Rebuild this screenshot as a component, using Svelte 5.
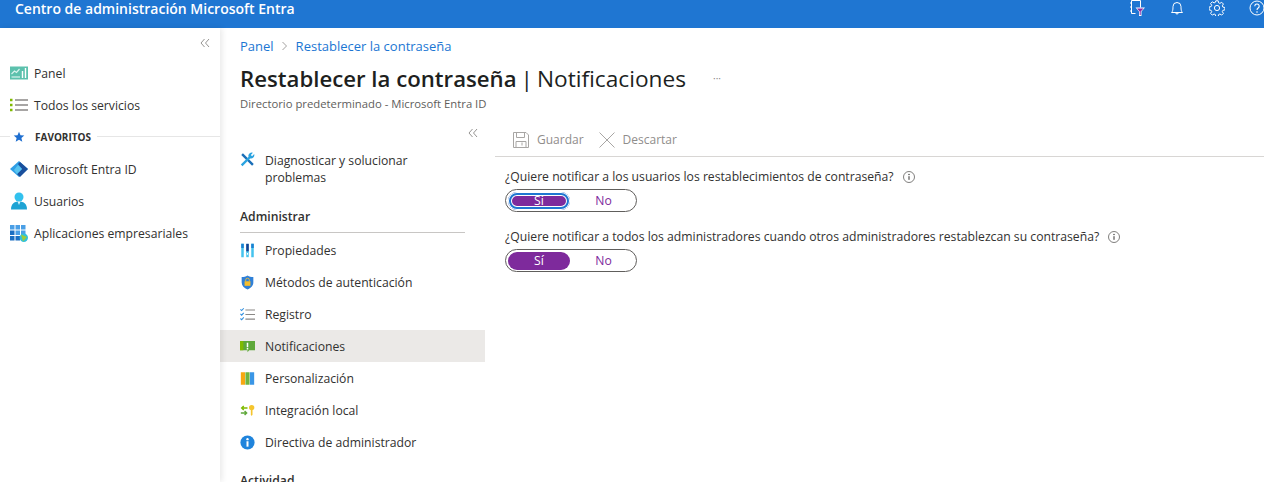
<script>
	const favorites = [
		{ id: "entra", label: "Microsoft Entra ID" },
		{ id: "users", label: "Usuarios" },
		{ id: "apps", label: "Aplicaciones empresariales" }
	];
	const manage = [
		{ id: "props", label: "Propiedades" },
		{ id: "auth", label: "Métodos de autenticación" },
		{ id: "log", label: "Registro" },
		{ id: "notif", label: "Notificaciones", active: true },
		{ id: "custom", label: "Personalización" },
		{ id: "local", label: "Integración local" },
		{ id: "admin", label: "Directiva de administrador" }
	];
	const questions = [
		{ text: "¿Quiere notificar a los usuarios los restablecimientos de contraseña?", focus: true },
		{ text: "¿Quiere notificar a todos los administradores cuando otros administradores restablezcan su contraseña?", focus: false }
	];
</script>

{#snippet icon(id)}
	<svg class="icon" viewBox="0 0 18 18" width="18" height="18" aria-hidden="true">
		{#if id === "panel"}
			<rect x="0" y="2.5" width="18" height="13" fill="#5cc1ad" />
			<path d="M1.5 10l3-3 2 1.500 3-3.500" fill="none" stroke="#d8f3ee" stroke-width="1.200" />
			<path d="M1.500 13h8.500" stroke="#d8f3ee" stroke-width="1.200" />
			<path d="M12.500 14V7M15.500 14V4" stroke="#fff" stroke-width="1.400" />
		{:else if id === "all"}
			<path d="M5 4h13M5 9h13M5 14h13" stroke="#8a8886" stroke-width="1.300" />
			<path d="M0 2.800h2.500v2.400H0zM0 7.800h2.500v2.400H0zM0 12.800h2.500v2.400H0z" fill="#7fba00" />
		{:else if id === "entra"}
			<path d="M9 1l9 8-9 8-9-8z" fill="#2f9fe6" />
			<path d="M10 2l8 7-8 8-3-3 5-5-4-5z" fill="#1a4f9c" />
			<path d="M8 5l4 4-5 5-3-4z" fill="#58c4f0" />
		{:else if id === "users"}
			<circle cx="9" cy="5" r="4.500" fill="#32c1ee" />
			<path d="M1 17.500c0-5.500 3-8 8-8s8 2.500 8 8z" fill="#1ea3d4" />
			<path d="M7.500 9.500L9 13l1.500-3.500z" fill="#d8f3fb" />
		{:else if id === "apps"}
			<path d="M0 1h4.500v4.500H0zM5.500 1H10v4.500H5.500zM11 1h4.500v4.500H11zM5.500 6.500H10V11H5.500zM11 6.500h4.500V11H11z" fill="#4a9fe6" />
			<path d="M0 6.500h4.500V11H0zM0 12h4.500v4.500H0zM5.500 12H10v4.500H5.500z" fill="#1b6ec2" />
			<circle cx="13.800" cy="13.800" r="4.200" fill="#32c1dd" />
			<path d="M11 10.500l6 2.500-4 4.500z" fill="#9ccc3c" />
		{:else if id === "tools"}
			<path d="M3.500 1.500l13 13-2 2-13-13z" fill="#1a6fb8" />
			<path d="M1 15l10-10 2 2-10 10z" fill="#2aa3e0" />
			<path d="M10 5a4 4 0 0 1 5.500-4l-2.500 2.500 1.500 1.500L17 2.500a4 4 0 0 1-5 5z" fill="#2aa3e0" />
		{:else if id === "props"}
			<path d="M1.500 1h3v16h-3zM13.500 1h3v16h-3z" fill="#45c3ee" />
			<path d="M7.500 1h3v16h-3z" fill="#45c3ee" />
			<path d="M1.500 1h3v5h-3zM13.500 1h3v5h-3z" fill="#1b7fd0" />
			<path d="M7.500 1h3v9h-3z" fill="#173f8f" />
			<path d="M8.400 12h1.200v2H8.400z" fill="#fff" />
		{:else if id === "auth"}
			<path d="M9 .5c2 1.400 4.300 2 7 2v6.500c0 4-3 6.800-7 8.500-4-1.700-7-4.500-7-8.500V2.500c2.700 0 5-.6 7-2z" fill="#2f80d8" />
			<rect x="5.500" y="7.500" width="7" height="5.500" fill="#f5bd2e" />
			<path d="M6.800 7.500V6a2.200 2.200 0 0 1 4.400 0v1.500" fill="none" stroke="#f5bd2e" stroke-width="1" />
		{:else if id === "log"}
			<path d="M.5 2.800l1.500 1.500L4.500 1.500M.5 8.300l1.500 1.500L4.500 7M.5 13.800l1.500 1.500 2.500-2.800" fill="none" stroke="#2f8fe0" stroke-width="1.300" />
			<path d="M6.500 3.500H18M6.500 9H18M6.500 14.500H18" stroke="#8a8886" stroke-width="1.300" />
		{:else if id === "notif"}
			<path d="M0 2.500h18v11h-7L9 16v-2.500H0z" fill="#5ea83a" />
			<path d="M0 2.500h4v11H0z" fill="#7fba00" />
			<path d="M8.100 4.500h1.800v5.300H8.100zM8.100 10.800h1.800v1.800H8.100z" fill="#fff" />
		{:else if id === "custom"}
			<path d="M1 1.500h5v15H1z" fill="#f7a711" />
			<path d="M6.500 1.500h5v15h-5z" fill="#6fb43f" />
			<path d="M12 1.500h5v15h-5z" fill="#3a96e6" />
		{:else if id === "local"}
			<path d="M9 6H2M4.500 3.500L2 6l2.500 2.500" fill="none" stroke="#7fba00" stroke-width="1.700" />
			<path d="M1 12h7M5.500 9.500L8 12l-2.500 2.500" fill="none" stroke="#5ea83a" stroke-width="1.700" />
			<circle cx="14" cy="5.500" r="3.200" fill="#f5c52e" />
			<path d="M13 8h2v6l-1 1.500-1-1.500z" fill="#f5c52e" />
		{:else if id === "admin"}
			<circle cx="9" cy="9" r="8.500" fill="#1f84dc" />
			<path d="M7.800 7.500h2.400v6.500H7.800z" fill="#fff" />
			<circle cx="9" cy="5" r="1.400" fill="#fff" />
		{/if}
	</svg>
{/snippet}

{#snippet chevrons()}
	<svg viewBox="0 0 10 10" width="10" height="10" aria-hidden="true">
		<path d="M4.500 1L1 5l3.500 4M9 1L5.500 5 9 9" fill="none" stroke="#8a8886" stroke-width="0.900" />
	</svg>
{/snippet}

<div class="page">
	<header class="topbar">
		<span class="brand">Centro de administración Microsoft Entra</span>
		<div class="actions">
			<svg viewBox="0 0 16 16" width="16" height="16" aria-hidden="true">
				<path d="M2.500.5h9v7M2.500.5v13h4M1 3h1.500M1 7h1.500M1 11h1.500" fill="none" stroke="#fff" stroke-width="1" />
				<path d="M6.500 7.500h9.500l-3.500 4v4.500h-2.500v-4.500z" fill="#fff" />
				<path d="M8 8.500h6.500l-2.800 3v3.500h-1v-3.500z" fill="#8a2da5" />
			</svg>
			<svg viewBox="0 0 16 16" width="16" height="16" aria-hidden="true">
				<path d="M2.500 12.500c1-1 1.500-2 1.500-6a4 4 0 0 1 8 0c0 4 .5 5 1.500 6zM6.500 12.500c0 2 3 2 3 0" fill="none" stroke="#fff" stroke-width="1" />
			</svg>
			<svg viewBox="0 0 16 16" width="16" height="16" aria-hidden="true">
				<circle cx="8" cy="8" r="2.600" fill="none" stroke="#fff" stroke-width="1" />
				<path d="M6.800.8h2.400l.4 2 1.300.6 1.800-1.100 1.700 1.700-1.100 1.800.6 1.300 2 .4v2.400l-2 .4-.6 1.300 1.100 1.800-1.700 1.700-1.800-1.100-1.300.6-.4 2H6.800l-.4-2-1.300-.6-1.800 1.100-1.700-1.700 1.100-1.800-.6-1.300-2-.4V7l2-.4.6-1.300-1.100-1.800 1.700-1.700 1.800 1.100 1.300-.6z" fill="none" stroke="#fff" stroke-width="1" />
			</svg>
			<svg viewBox="0 0 16 16" width="16" height="16" aria-hidden="true">
				<circle cx="8" cy="8" r="7" fill="none" stroke="#fff" stroke-width="1" />
				<path d="M5.800 6.200a2.200 2.200 0 1 1 3.400 1.800c-.8.500-1.200 1-1.200 2" fill="none" stroke="#fff" stroke-width="1.100" />
				<circle cx="8" cy="12" r=".8" fill="#fff" />
			</svg>
		</div>
	</header>

	<div class="body">
		<nav class="sidenav">
			<div class="collapse">{@render chevrons()}</div>
			<div class="nav-item">
				{@render icon("panel")}<span>Panel</span>
			</div>
			<div class="nav-item">
				{@render icon("all")}<span>Todos los servicios</span>
			</div>
			<div class="fav-head">
				<svg viewBox="0 0 12 12" width="12" height="12" aria-hidden="true">
					<path d="M6 .8l1.500 3.500 3.800.3-2.900 2.500.9 3.700L6 8.800l-3.300 2 .9-3.700L.7 4.600l3.800-.3z" fill="#1f6fd0" />
				</svg>
				<span>FAVORITOS</span>
			</div>
			{#each favorites as item}
				<div class="nav-item">
					{@render icon(item.id)}<span>{item.label}</span>
				</div>
			{/each}
		</nav>

		<main class="main">
			<div class="crumbs">
				<span>Panel</span>
				<svg viewBox="0 0 8 10" width="8" height="10" aria-hidden="true">
					<path d="M1.500 1l4 4-4 4" fill="none" stroke="#8a8886" stroke-width="0.800" />
				</svg>
				<span>Restablecer la contraseña</span>
			</div>
			<div class="title-row">
				<h1><strong>Restablecer la contraseña</strong><span class="section">| Notificaciones</span></h1>
				<span class="more">···</span>
			</div>
			<div class="subtitle">Directorio predeterminado - Microsoft Entra ID</div>

			<div class="blade">
				<aside class="menu">
					<div class="menu-collapse">{@render chevrons()}</div>
					<div class="menu-item wrap">
						{@render icon("tools")}<span>Diagnosticar y solucionar problemas</span>
					</div>
					<div class="menu-group">Administrar</div>
					{#each manage as item}
						<div class="menu-item" class:active={item.active}>
							{@render icon(item.id)}<span>{item.label}</span>
						</div>
					{/each}
					<div class="menu-group last">Actividad</div>
				</aside>

				<section class="content">
					<div class="toolbar">
						<button>
							<svg viewBox="0 0 16 16" width="16" height="16" aria-hidden="true">
								<path d="M.5.5h12.500l2.500 2.500v12.500H.5zM3.500.5v5h8v-5M3 15.500v-6h10v6M9 10.500v3" fill="none" stroke="#a8a6a4" stroke-width="1" />
							</svg>
							Guardar
						</button>
						<button>
							<svg viewBox="0 0 16 16" width="16" height="16" aria-hidden="true">
								<path d="M.5.5l15 15M15.500.5l-15 15" fill="none" stroke="#a8a6a4" stroke-width="1" />
							</svg>
							Descartar
						</button>
					</div>

					<div class="form">
						{#each questions as q}
							<div class="field">
								<div class="question">
									<span>{q.text}</span>
									<svg viewBox="0 0 12 12" width="12" height="12" aria-hidden="true">
										<circle cx="6" cy="6" r="5.500" fill="none" stroke="#605e5c" stroke-width="0.800" />
										<path d="M6 5.200v3.600" stroke="#323130" stroke-width="1" />
										<circle cx="6" cy="3.500" r=".7" fill="#323130" />
									</svg>
								</div>
								<div class="toggle" class:focus={q.focus}>
									<span class="on">Sí</span>
									<span class="off">No</span>
								</div>
							</div>
						{/each}
					</div>
				</section>
			</div>
		</main>
	</div>
</div>

<style>
	:global(body) {
		margin: 0;
		background: #fff;
	}

	.page {
		height: 482px;
		overflow: hidden;
		display: flex;
		flex-direction: column;
		font-family: "Open Sans", "Noto Sans", sans-serif;
		font-size: 12.2px;
		color: #323130;
	}

	.topbar {
		height: 28px;
		flex: none;
		background: #1f76d2;
		display: flex;
		align-items: flex-start;
		justify-content: space-between;
		padding-left: 15px;
	}

	.brand {
		color: #fff;
		font-size: 14px;
		font-weight: 600;
		line-height: 18px;
	}

	.actions {
		display: flex;
		gap: 24px;
		margin-right: -1px;
	}

	.body {
		flex: 1;
		display: flex;
		min-height: 0;
	}

	.sidenav {
		width: 220px;
		flex: none;
		box-shadow: 2px 0 6px rgba(0, 0, 0, 0.09);
		display: flex;
		flex-direction: column;
		position: relative;
	}

	.collapse {
		height: 29px;
		display: flex;
		align-items: center;
		justify-content: flex-end;
		padding-right: 10px;
	}

	.nav-item {
		height: 32px;
		display: flex;
		align-items: center;
		gap: 6px;
		padding-left: 10px;
	}

	.fav-head {
		height: 32px;
		display: flex;
		align-items: center;
		font-size: 10px;
		font-weight: 700;
		position: relative;
		padding-left: 13px;
	}

	.fav-head::before {
		content: "";
		position: absolute;
		left: 0;
		right: 0;
		top: 15px;
		border-top: 1px solid #e6e6e6;
	}

	.fav-head svg,
	.fav-head span {
		position: relative;
		background: #fff;
	}

	.fav-head svg {
		box-sizing: content-box;
		padding: 0 4px 0 3px;
		margin-left: -3px;
	}

	.fav-head span {
		padding: 0 6px;
	}

	.main {
		flex: 1;
		min-width: 0;
		display: flex;
		flex-direction: column;
		padding-left: 20px;
	}

	.crumbs {
		height: 36px;
		display: flex;
		align-items: center;
		gap: 7px;
		font-size: 13px;
		color: #1b76d3;
	}

	.title-row {
		display: flex;
		align-items: center;
		height: 32px;
		padding-bottom: 4px;
		box-sizing: border-box;
	}

	h1 {
		margin: 0;
		font-size: 22.2px;
		font-weight: 400;
		color: #201f1e;
		white-space: nowrap;
	}

	h1 strong {
		font-weight: 600;
	}

	.section {
		margin-left: 4px;
		font-size: 22.7px;
		word-spacing: -2px;
	}

	.more {
		margin-left: 27px;
		color: #8a8886;
		font-size: 10px;
	}

	.subtitle {
		font-size: 11.3px;
		color: #605e5c;
		height: 17px;
		line-height: 15px;
	}

	.blade {
		flex: 1;
		display: flex;
		margin: 10px 0 0 -20px;
		min-height: 0;
	}

	.menu {
		width: 265px;
		flex: none;
	}

	.menu-collapse {
		height: 19px;
		display: flex;
		justify-content: flex-end;
		align-items: center;
		padding-right: 7px;
	}

	.menu-item {
		height: 32px;
		display: flex;
		align-items: center;
		gap: 10px;
		padding-left: 20px;
	}

	.menu-item .icon {
		width: 15px;
		height: 15px;
	}

	.menu-item.wrap {
		height: auto;
		align-items: flex-start;
		padding-top: 10px;
		line-height: 17px;
		width: 190px;
	}

	.menu-item.active {
		background: #ebe9e7;
	}

	.menu-group {
		margin: 20px 20px 1px;
		height: 26px;
		line-height: 22px;
		font-weight: 600;
		border-bottom: 1px solid #c8c6c4;
	}

	.menu-group.last {
		border: 0;
		margin-top: 12px;
	}

	.icon {
		flex: none;
	}

	.content {
		flex: 1;
		min-width: 0;
		padding-left: 10px;
	}

	.toolbar {
		height: 34px;
		display: flex;
		align-items: center;
		gap: 15px;
		padding-left: 18px;
		box-sizing: border-box;
		border-bottom: 1px solid #d8d6d4;
	}

	button {
		border: 0;
		background: none;
		padding: 0;
		font: inherit;
		font-size: 12px;
		color: #8f8d8b;
		display: flex;
		align-items: center;
		gap: 8px;
	}

	.form {
		padding: 11px 0 0 10px;
		display: flex;
		flex-direction: column;
		gap: 16px;
	}

	.question {
		height: 17px;
		display: flex;
		align-items: center;
		gap: 9px;
		white-space: nowrap;
		margin-bottom: 4px;
	}

	.toggle {
		width: 132px;
		height: 23px;
		box-sizing: border-box;
		border: 1px solid #605e5c;
		border-radius: 12px;
		display: flex;
		align-items: center;
		padding: 0 2px;
	}

	.toggle span {
		text-align: center;
		height: 18px;
		line-height: 18px;
		border-radius: 9px;
	}

	.on {
		background: #7e2a9c;
		color: #fff;
		flex: 0 0 62px;
	}

	.off {
		color: #7e2a9c;
		flex: 1;
		padding-left: 3px;
	}

	.focus .on {
		box-shadow: inset 0 0 0 1px #fff, inset 0 0 0 3px #1f76d2, inset 0 0 0 4px #fff, 0 0 0 1px #fff;
	}
</style>
